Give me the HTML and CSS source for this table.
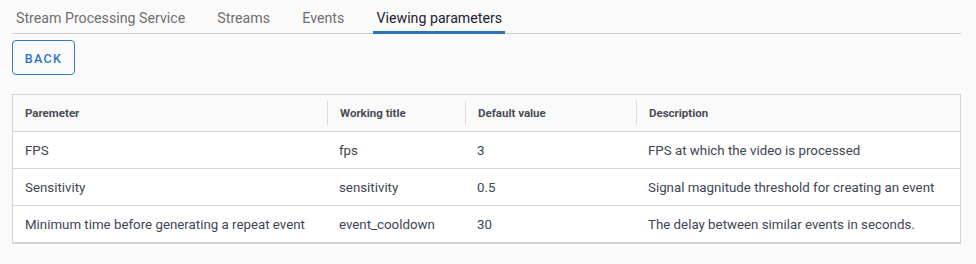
FILE: index.html
```html
<!DOCTYPE html>
<html lang="en">
<head>
<meta charset="utf-8">
<title>Viewing parameters</title>
<link rel="stylesheet" href="styles.css">
</head>
<body>
<div class="page">
  <nav class="tabs">
    <span class="tab">Stream Processing Service</span>
    <span class="tab">Streams</span>
    <span class="tab">Events</span>
    <span class="tab active">Viewing parameters</span>
  </nav>
  <button class="back">BACK</button>
  <div class="grid">
    <div class="row head">
      <div class="cell"><span class="label">Paremeter</span></div>
      <div class="cell"><span class="sep"></span><span class="label">Working title</span></div>
      <div class="cell"><span class="sep"></span><span class="label">Default value</span></div>
      <div class="cell"><span class="sep"></span><span class="label">Description</span></div>
    </div>
    <div class="row">
      <div class="cell">FPS</div>
      <div class="cell">fps</div>
      <div class="cell">3</div>
      <div class="cell">FPS at which the video is processed</div>
    </div>
    <div class="row">
      <div class="cell">Sensitivity</div>
      <div class="cell">sensitivity</div>
      <div class="cell">0.5</div>
      <div class="cell">Signal magnitude threshold for creating an event</div>
    </div>
    <div class="row">
      <div class="cell">Minimum time before generating a repeat event</div>
      <div class="cell">event_cooldown</div>
      <div class="cell">30</div>
      <div class="cell">The delay between similar events in seconds.</div>
    </div>
  </div>
</div>
</body>
</html>
```

FILE: styles.css
```css
* { box-sizing: border-box; }
html, body { margin: 0; padding: 0; }
body {
  background: #fafafa;
  font-family: Roboto, "Liberation Sans", Arial, sans-serif;
  color: #404653;
  width: 976px;
  height: 264px;
  overflow: hidden;
}
.page {
  padding: 0 15px 0 12px;
}
.tabs {
  display: flex;
  gap: 32.2px;
  height: 34px;
  padding-left: 4px;
  border-bottom: 1px solid #cfcfcf;
  align-items: flex-start;
}
.tab {
  position: relative;
  font-size: 14.2px;
  color: #6f6f6f;
  line-height: 20px;
  padding-top: 8px;
  height: 33px;
  white-space: nowrap;
}
.tab.active {
  color: #1f2230;
}
.tab.active::after {
  content: "";
  position: absolute;
  left: -3px;
  right: -3px;
  bottom: -1px;
  height: 3px;
  background: #2c72b8;
}
.back {
  display: block;
  margin-top: 6px;
  width: 63px;
  height: 35px;
  padding: 0;
  background: transparent;
  border: 1px solid #3479c4;
  border-radius: 4px;
  color: #2f74c0;
  font-family: Roboto, "Liberation Sans", Arial, sans-serif;
  font-size: 12.5px;
  font-weight: 500;
  letter-spacing: 1.4px;
  text-indent: 0;
  padding-top: 1px;
}
.grid {
  margin-top: 19px;
  border: 1px solid #d4d4d4;
  border-bottom-width: 2px;
  background: #fff;
}
.row {
  display: grid;
  grid-template-columns: 314px 138px 171px 1fr;
  height: 37px;
  border-top: 1px solid #d6d6d6;
  font-size: 13.3px;
}
.row:first-child { border-top: none; height: 36px; }
.row.head {
  background: #fafafa;
  font-size: 11.5px;
  font-weight: 700;
  color: #4a4d55;
}
.cell {
  display: flex;
  align-items: center;
  padding-left: 12px;
  white-space: nowrap;
}
.head .cell:not(:first-child) { padding-left: 0; }
.sep {
  width: 1px;
  height: 24px;
  background: #dcdcdc;
  margin-right: 12px;
}
```
